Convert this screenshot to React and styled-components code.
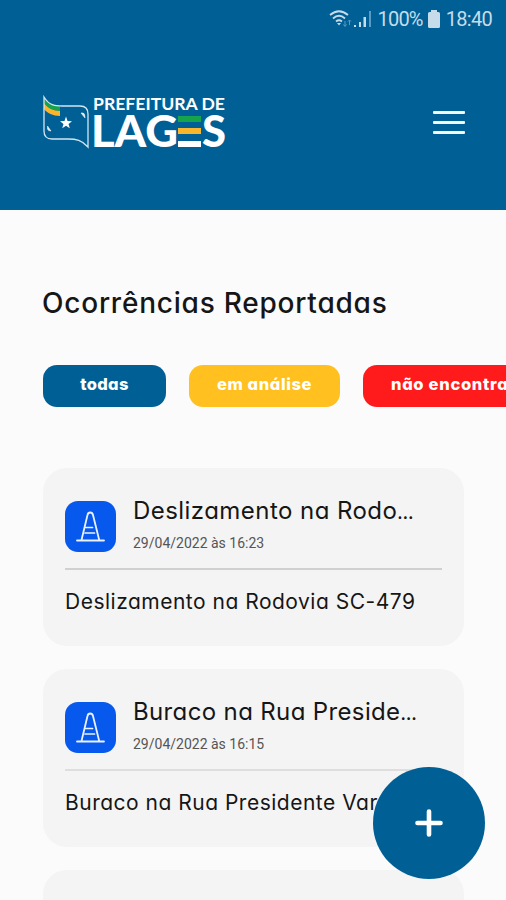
import React from 'react';
import styled, { createGlobalStyle } from 'styled-components';

const GlobalStyle = createGlobalStyle`
    * {
        box-sizing: border-box;
    }

    body {
        margin: 0;
        background: #fbfbfb;
        color: #161616;
        font-family: Inter, "Open Sans", sans-serif;
        font-feature-settings: "cv11" 1, "calt" 0;
    }

    button {
        border: 0;
        padding: 0;
        background: none;
        font: inherit;
        font-feature-settings: inherit;
        color: inherit;
    }
`;

const Screen = styled.div`
    position: relative;
    height: 900px;
    overflow: hidden;
`;

const Header = styled.header`
    height: 210px;
    background: #006096;
`;

const StatusBar = styled.div`
    display: flex;
    justify-content: flex-end;
    align-items: center;
    height: 38px;
    padding-right: 14px;
    color: #c6dcea;
    font-family: Roboto, sans-serif;
    font-size: 20px;
`;

const StatusText = styled.span`
    letter-spacing: ${(props) => props.$spacing || '0'};
`;

const StatusIcon = styled.svg`
    display: block;
    flex: none;
    margin-right: ${(props) => props.$gap};
`;

const Brand = styled.div`
    display: flex;
    justify-content: space-between;
    align-items: flex-start;
    padding: 54px 41px 0 42px;
`;

const LogoImage = styled.svg`
    display: block;
    overflow: visible;
`;

const MenuButton = styled.button`
    display: flex;
    flex-direction: column;
    gap: 7px;
    width: 32px;
    margin-top: 19px;
`;

const MenuLine = styled.span`
    height: 3px;
    border-radius: 1px;
    background: #f2f8fb;
`;

const Heading = styled.h1`
    margin: 74px 0 0 42px;
    font-size: 28px;
    line-height: 38px;
    font-weight: 450;
    letter-spacing: 0.78px;
    white-space: nowrap;
`;

const Filters = styled.div`
    display: flex;
    gap: 23px;
    margin-top: 43px;
    padding-left: 43px;
`;

const Filter = styled.button`
    flex: none;
    width: ${(props) => props.$width};
    height: 42px;
    padding-bottom: 4px;
    border-radius: 14px;
    background: ${(props) => props.$color};
    color: #fff;
    font-size: 16.5px;
    font-weight: 800;
    letter-spacing: ${(props) => props.$spacing};
    white-space: nowrap;
`;

const List = styled.main`
    display: flex;
    flex-direction: column;
    gap: 23px;
    margin-top: 61px;
    padding: 0 42px 0 43px;
`;

const Card = styled.article`
    flex: none;
    height: 178px;
    padding: 33px 22px 0;
    border-radius: 24px;
    background: #f4f4f4;
`;

const CardHeader = styled.div`
    display: flex;
    gap: 17px;
    height: 69px;
    border-bottom: 2px solid ${(props) => props.$line};
`;

const IconTile = styled.div`
    display: grid;
    place-items: center;
    flex: none;
    width: 51px;
    height: 51px;
    border-radius: 13px;
    background: #0758ec;
`;

const CardTitle = styled.h2`
    height: 32px;
    margin: -6px 0 0;
    font-size: 24px;
    line-height: 32px;
    font-weight: 400;
    letter-spacing: ${(props) => props.$spacing};
    white-space: nowrap;
`;

const Ellipsis = styled.span`
    font-size: 17px;
    font-weight: 600;
    letter-spacing: 0;
`;

const CardDate = styled.time`
    display: block;
    margin-top: 7px;
    color: #555;
    font-family: Roboto, sans-serif;
    font-size: 14px;
    line-height: 18px;
    letter-spacing: 0;
`;

const Description = styled.p`
    margin: 17px 0 0;
    font-size: 21px;
    line-height: 30px;
    letter-spacing: ${(props) => props.$spacing};
    white-space: nowrap;
`;

const AddButton = styled.button`
    position: absolute;
    right: 21px;
    bottom: 21px;
    display: grid;
    place-items: center;
    width: 112px;
    height: 112px;
    border-radius: 50%;
    background: #006096;
`;

const filters = [
    { label: 'todas', color: '#006096', width: '123px', spacing: '0.35px' },
    { label: 'em análise', color: '#ffc020', width: '151px', spacing: '0.6px' },
    { label: 'não encontradas', color: '#ff1b1c', width: '206px', spacing: '0.7px' },
];

const reports = [
    {
        title: 'Deslizamento na Rodo',
        date: '29/04/2022 às 16:23',
        description: 'Deslizamento na Rodovia SC-479',
        line: '#d0d0d0',
        titleSpacing: '0.45px',
    },
    {
        title: 'Buraco na Rua Preside',
        date: '29/04/2022 às 16:15',
        description: 'Buraco na Rua Presidente Vargas',
        line: '#dedede',
        titleSpacing: '0.36px',
    },
];

function Logo() {
    return (
        <LogoImage width="186" height="60" viewBox="42 92 186 60" fill="none">
            <path d="M44 97C49 105 54 105 60 106V111C54 111 47 108 44 103Z" fill="#15a44c" />
            <path d="M44 103C47 108 54 111 60 111V116C53 116 47 113 44 109Z" fill="#f9b52c" />
            <path d="M44 97C50 107 57 106 65 106H80Q88 106 88 114V147C82 140 76 139 68 139H52Q44 139 44 131Z" stroke="#d3e5f0" strokeWidth="1.3" />
            <path d="M66 116.5L67.5 121L72 121.2L68.5 124L69.8 128.3L66 125.8L62.2 128.3L63.5 124L60 121.2L64.5 121Z" fill="#fff" />
            <path d="M81 113H83Q85 113 85 118ZM47.5 126V129Q48 131 51 131Z" fill="#e3eff6" stroke="#e3eff6" strokeWidth="0.6" />
            <g fill="#fff" fontFamily="Lato, sans-serif">
                <text x="93" y="110" fontSize="17.5" fontWeight="700" textLength="132" lengthAdjust="spacingAndGlyphs">PREFEITURA DE</text>
                <text x="91" y="147" fontSize="43" fontWeight="900" textLength="87" lengthAdjust="spacingAndGlyphs">LAG</text>
                <text x="202" y="147" fontSize="43" fontWeight="900" textLength="24" lengthAdjust="spacingAndGlyphs">S</text>
            </g>
            <path d="M178 116H201V122H178Z" fill="#15a44c" />
            <path d="M178 128H201V134H178Z" fill="#f9b52c" />
            <path d="M178 141H201V147H178Z" fill="#fff" />
        </LogoImage>
    );
}

function ConeIcon() {
    return (
        <svg width="31" height="32" viewBox="0 0 31 32" fill="none" stroke="#eaf1ff" strokeWidth="1.8" strokeLinecap="round" strokeLinejoin="round">
            <path d="M2 29.5H29M6.5 29L12.5 4Q13 1.5 15.2 1.5Q17.4 1.5 18 4L24.2 29" />
            <path d="M10.5 16.5H17.5M10 22H19.5" strokeWidth="1.7" />
        </svg>
    );
}

export default function App() {
    return (
        <Screen>
            <GlobalStyle />
            <Header>
                <StatusBar>
                    <StatusIcon $gap="2px" width="23" height="20" viewBox="0 0 23 20" fill="none" stroke="currentColor" strokeWidth="1.8">
                        <path d="M1 6Q10 -1.5 19 6M4 9.5Q10 4 16 9.5M7 12.5Q10 10 13 12.5" />
                        <path d="M8 14L10 16.5L12 14Z" fill="currentColor" stroke="none" />
                        <path d="M16 12V17M14.5 15.5L16 17.5L17.5 15.5M20.5 16V11M19 12.5L20.5 11L22 12.5" stroke="#5a9bc4" strokeWidth="1" />
                    </StatusIcon>
                    <StatusIcon $gap="7px" width="17" height="18" viewBox="0 0 17 18">
                        <path d="M0 15H2V17H0ZM5 12H7V17H5ZM9.5 7H12V17H9.5Z" fill="currentColor" />
                        <path d="M15 1H17V17H15Z" fill="#5a9bc4" />
                    </StatusIcon>
                    <StatusText $spacing="-0.8px">100%</StatusText>
                    <StatusIcon $gap="6px" width="17" height="18" viewBox="0 0 17 18" fill="currentColor">
                        <path d="M8 0H14V2H15.5Q17 2 17 3.5V16.5Q17 18 15.5 18H6.5Q5 18 5 16.5V3.5Q5 2 6.5 2H8Z" />
                    </StatusIcon>
                    <StatusText $spacing="-0.7px">18:40</StatusText>
                </StatusBar>
                <Brand>
                    <Logo />
                    <MenuButton aria-label="Menu">
                        <MenuLine />
                        <MenuLine />
                        <MenuLine />
                    </MenuButton>
                </Brand>
            </Header>
            <Heading>Ocorrências Reportadas</Heading>
            <Filters>
                {filters.map((filter) => (
                    <Filter
                        key={filter.label}
                        $color={filter.color}
                        $width={filter.width}
                        $spacing={filter.spacing}>
                        {filter.label}
                    </Filter>
                ))}
            </Filters>
            <List>
                {reports.map((report) => (
                    <Card key={report.date}>
                        <CardHeader $line={report.line}>
                            <IconTile><ConeIcon /></IconTile>
                            <div>
                                <CardTitle $spacing={report.titleSpacing}>{report.title}<Ellipsis>…</Ellipsis></CardTitle>
                                <CardDate>{report.date}</CardDate>
                            </div>
                        </CardHeader>
                        <Description $spacing="0.5px">{report.description}</Description>
                    </Card>
                ))}
                <Card />
            </List>
            <AddButton aria-label="Adicionar">
                <svg width="28" height="28" viewBox="0 0 28 28" stroke="#fff" strokeWidth="4.6" strokeLinecap="round">
                    <path d="M14 2.5V25.5M2.5 14H25.5" />
                </svg>
            </AddButton>
        </Screen>
    );
}
